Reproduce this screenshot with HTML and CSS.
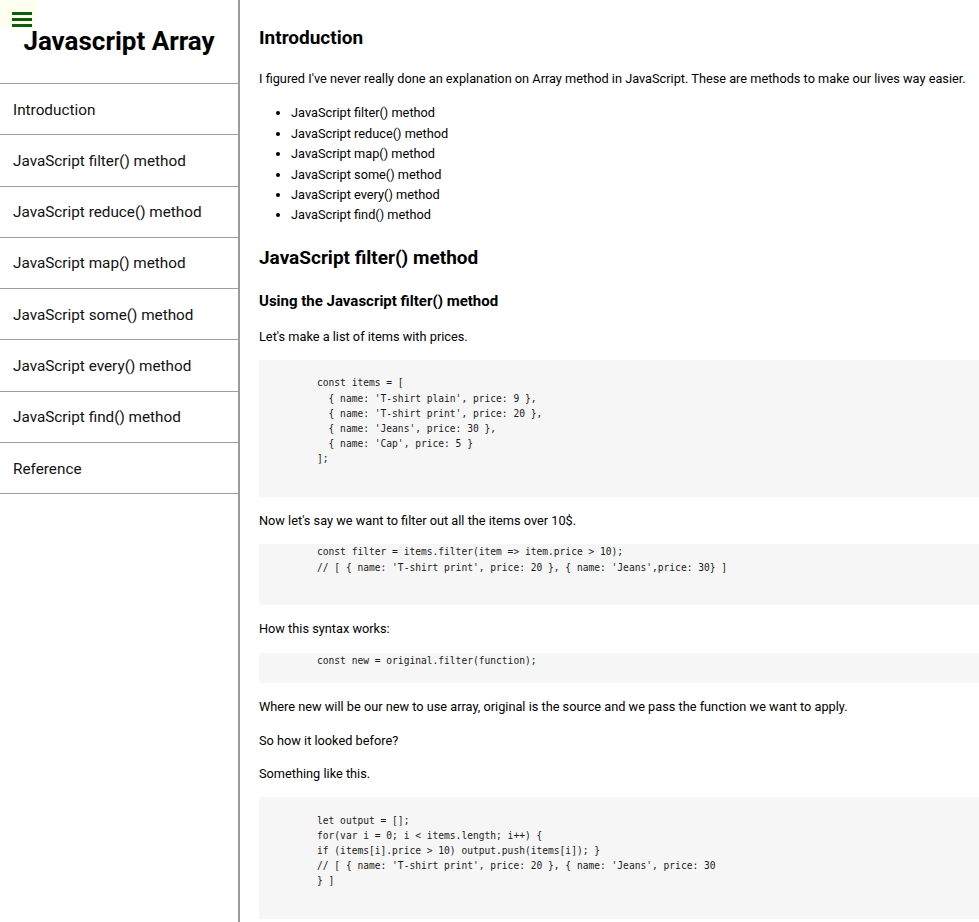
FILE: index.html
```html
<!DOCTYPE html>
<html lang="en">
<head>
<meta charset="utf-8">
<title>Javascript Array</title>
<link rel="stylesheet" href="styles.css">
</head>
<body>
<div class="page">
  <nav class="sidebar" id="navbar">
    <button class="toggle" aria-label="menu">
      <svg width="20" height="15" viewBox="0 0 20 15"><rect x="0" y="0" width="20" height="3" fill="#0b5f0b"/><rect x="0" y="6" width="20" height="3" fill="#0b5f0b"/><rect x="0" y="12" width="20" height="3" fill="#0b5f0b"/></svg>
    </button>
    <header class="side-head">Javascript Array</header>
    <a class="nav-link" href="#Introduction">Introduction</a>
    <a class="nav-link" href="#filter">JavaScript filter() method</a>
    <a class="nav-link" href="#reduce">JavaScript reduce() method</a>
    <a class="nav-link" href="#map">JavaScript map() method</a>
    <a class="nav-link" href="#some">JavaScript some() method</a>
    <a class="nav-link" href="#every">JavaScript every() method</a>
    <a class="nav-link" href="#find">JavaScript find() method</a>
    <a class="nav-link" href="#Reference">Reference</a>
  </nav>
  <main class="main" id="main-doc">
    <section class="main-section" id="Introduction">
      <h2 class="first">Introduction</h2>
      <p>I figured I've never really done an explanation on Array method in JavaScript. These are methods to make our lives way easier.</p>
      <ul>
        <li>JavaScript filter() method</li>
        <li>JavaScript reduce() method</li>
        <li>JavaScript map() method</li>
        <li>JavaScript some() method</li>
        <li>JavaScript every() method</li>
        <li>JavaScript find() method</li>
      </ul>
    </section>
    <section class="main-section" id="filter">
      <h2>JavaScript filter() method</h2>
      <h3>Using the Javascript filter() method</h3>
      <p>Let's make a list of items with prices.</p>
<pre class="code">

const items = [
  { name: 'T-shirt plain', price: 9 },
  { name: 'T-shirt print', price: 20 },
  { name: 'Jeans', price: 30 },
  { name: 'Cap', price: 5 }
];

 </pre>
      <p>Now let's say we want to filter out all the items over 10$.</p>
<pre class="code">const filter = items.filter(item =&gt; item.price &gt; 10);
// [ { name: 'T-shirt print', price: 20 }, { name: 'Jeans',price: 30} ]

 </pre>
      <p>How this syntax works:</p>
<pre class="code">const new = original.filter(function);
 </pre>
      <p>Where new will be our new to use array, original is the source and we pass the function we want to apply.</p>
      <p>So how it looked before?</p>
      <p>Something like this.</p>
<pre class="code">

let output = [];
for(var i = 0; i &lt; items.length; i++) {
if (items[i].price &gt; 10) output.push(items[i]); }
// [ { name: 'T-shirt print', price: 20 }, { name: 'Jeans', price: 30
} ]

 </pre>
    </section>
  </main>
</div>
</body>
</html>
```
FILE: styles.css
```css
html, body {
  margin: 0;
  padding: 0;
  background: #ffffff;
}

body {
  font-family: Roboto, "Liberation Sans", sans-serif;
  color: #000;
  height: 922px;
  overflow: hidden;
}

.page {
  display: flex;
  align-items: stretch;
  min-height: 922px;
}

.sidebar {
  position: relative;
  width: 238px;
  flex: 0 0 238px;
  border-right: 2px solid #989c9c;
  display: flex;
  flex-direction: column;
}

.toggle {
  position: absolute;
  left: 0;
  top: 0;
  width: 37px;
  height: 28px;
  padding: 10px 0 0 12px;
  margin: 0;
  border: none;
  background: #fffff0;
  display: block;
  box-sizing: border-box;
  text-align: left;
}

.toggle svg {
  display: block;
}

.side-head {
  height: 84px;
  box-sizing: border-box;
  padding-top: 25px;
  text-align: center;
  font-size: 26px;
  font-weight: 700;
  line-height: 32px;
  border-bottom: 1px solid #9a9e9e;
}

.nav-link {
  display: block;
  padding: 16.5px 13px 14.5px 13px;
  font-size: 15.3px;
  line-height: 19.3px;
  color: #111;
  text-decoration: none;
  border-bottom: 1px solid #9a9e9e;
}

.main {
  flex: 1;
  padding: 5px 0 0 19px;
  min-width: 0;
}

h2 {
  font-size: 19px;
  font-weight: 700;
  line-height: 22px;
  margin: 21px 0 20px;
}

h2.first {
  margin-top: 22px;
}

h3 {
  font-size: 15px;
  font-weight: 700;
  line-height: 18px;
  margin: 23px 0 17px;
}

p {
  font-size: 12.75px;
  line-height: 20.4px;
  margin: 13px 0;
}

ul {
  margin: 14px 0 13px;
  padding-left: 32px;
  font-size: 12.75px;
  line-height: 20.4px;
}

.code {
  background: #f6f6f6;
  margin: 13px 0 14px;
  padding: 0 0 0 58px;
  font-family: "DejaVu Sans Mono", monospace;
  font-size: 9.6px;
  line-height: 15.2px;
  color: #1a1a1a;
  white-space: pre;
}
```
